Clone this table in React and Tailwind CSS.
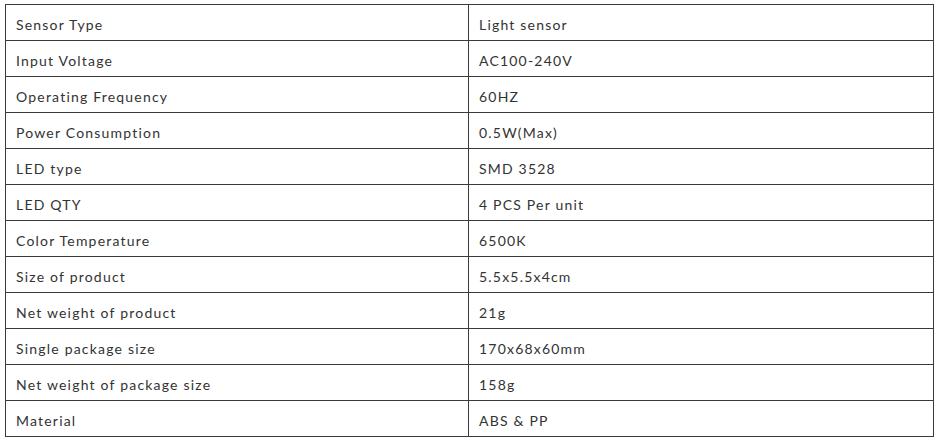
import React from 'react'

const rows = [
  ['Sensor Type', 'Light sensor'],
  ['Input Voltage', 'AC100-240V'],
  ['Operating Frequency', '60HZ'],
  ['Power Consumption', '0.5W(Max)'],
  ['LED type', 'SMD 3528'],
  ['LED QTY', '4 PCS Per unit'],
  ['Color Temperature', '6500K'],
  ['Size of product', '5.5x5.5x4cm'],
  ['Net weight of product', '21g'],
  ['Single package size', '170x68x60mm'],
  ['Net weight of package size', '158g'],
  ['Material', 'ABS & PP'],
]

export default function App() {
  return (
    <div className="w-[935px] h-[441px] bg-white pt-[4px] pl-[5px]">
      <table
        className="w-[929px] border-collapse table-fixed text-[14px] text-[#333] tracking-[1.2px]"
        style={{ fontFamily: 'Lato, "Noto Sans", sans-serif' }}
      >
        <tbody>
          {rows.map(([k, v]) => (
            <tr key={k} className="h-[36px]">
              <td className="w-[463px] border border-[#3a3a3a] pl-[10px] pt-[4px] align-middle">{k}</td>
              <td className="border border-[#3a3a3a] pl-[10px] pt-[4px] align-middle">{v}</td>
            </tr>
          ))}
        </tbody>
      </table>
    </div>
  )
}
